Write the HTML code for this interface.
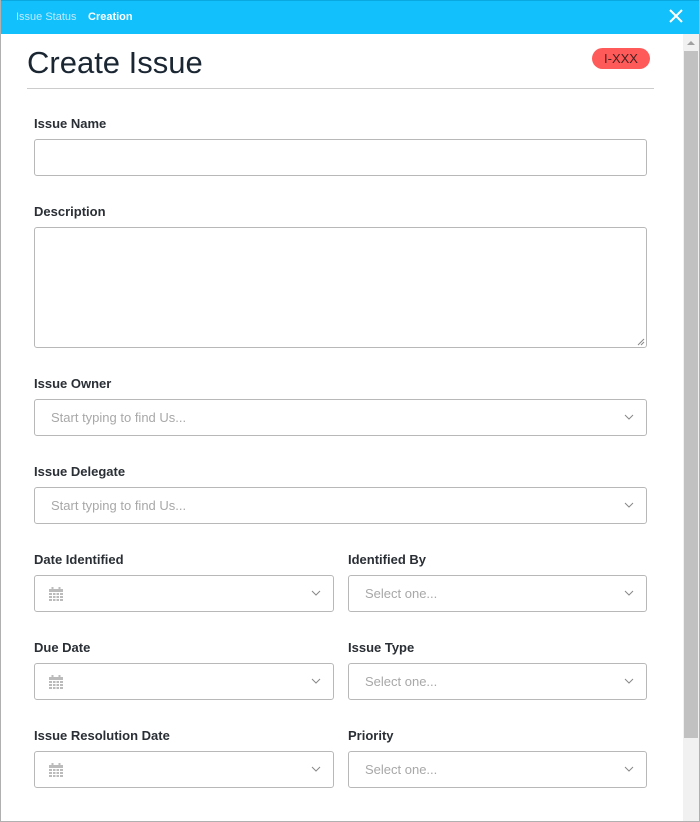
<!DOCTYPE html>
<html><head><style>
*{box-sizing:border-box;margin:0;padding:0}
body{width:700px;height:822px;overflow:hidden;font-family:"Liberation Sans",sans-serif;background:#fff;position:relative}
.frame{position:absolute;inset:0;border:1px solid #b0b0b0;border-top:none}
.hdr{position:absolute;left:0;top:0;width:700px;height:34px;background:#12c0fc;border:1px solid #0aa8e0;border-bottom:none}
.hdr .s{position:absolute;left:15px;top:10px;font-size:11px;color:#bfeaff}
.hdr .c{position:absolute;left:87px;top:10px;font-size:11px;color:#fff;font-weight:bold}
.x{position:absolute;left:667px;top:7px}
h1{position:absolute;left:27px;top:45px;font-size:31px;font-weight:normal;color:#1b2633}
.badge{position:absolute;left:592px;top:48px;width:58px;height:21px;border-radius:11px;background:#ff5a5a;color:#4a2020;font-size:13px;text-align:center;line-height:21px}
.rule{position:absolute;left:27px;top:88px;width:627px;height:1px;background:#ccc}
.lbl{position:absolute;font-size:13px;font-weight:bold;color:#2a2f35}
.in{position:absolute;border:1px solid #b8b8b8;border-radius:3px;background:#fff;height:37px}
.ph{position:absolute;left:16px;top:10px;font-size:13px;color:#a8a8a8}
.chev{position:absolute;right:12px;top:14px}
.sb{position:absolute;left:683px;top:34px;width:16px;height:787px;background:#f1f1f1}
.thumb{position:absolute;left:684px;top:51px;width:14px;height:687px;background:#c1c1c1}
</style></head><body>
<div class="hdr"><span class="s">Issue Status</span><span class="c">Creation</span>
<svg class="x" width="16" height="16" viewBox="0 0 16 16"><path d="M2 2L14 14M14 2L2 14" stroke="#fff" stroke-width="2"/></svg></div>
<div class="frame"></div>
<div class="sb"></div><div class="thumb"></div>
<svg style="position:absolute;left:686px;top:40px" width="10" height="6"><path d="M1 5L5 1L9 5Z" fill="#a0a0a0"/></svg>
<h1>Create Issue</h1>
<div class="badge">I-XXX</div>
<div class="rule"></div>

<div class="lbl" style="left:34px;top:116px">Issue Name</div>
<div class="in" style="left:34px;top:139px;width:613px"></div>
<div class="lbl" style="left:34px;top:204px">Description</div>
<div class="in" style="left:34px;top:227px;width:613px;height:121px">
<svg style="position:absolute;right:1px;bottom:1px" width="8" height="8"><path d="M7 1L1 7M7 4L4 7" stroke="#888"/></svg></div>

<div class="lbl" style="left:34px;top:376px">Issue Owner</div>
<div class="in" style="left:34px;top:399px;width:613px"><span class="ph">Start typing to find Us...</span><svg class="chev" width="10" height="6"><path d="M1 1L5 5L9 1" stroke="#888" fill="none"/></svg></div>
<div class="lbl" style="left:34px;top:464px">Issue Delegate</div>
<div class="in" style="left:34px;top:487px;width:613px"><span class="ph">Start typing to find Us...</span><svg class="chev" width="10" height="6"><path d="M1 1L5 5L9 1" stroke="#888" fill="none"/></svg></div>

<div class="lbl" style="left:34px;top:552px">Date Identified</div>
<div class="in" style="left:34px;top:575px;width:300px"><svg style="position:absolute;left:13px;top:10px" width="16" height="16" viewBox="0 0 16 16"><rect x="1" y="3" width="14" height="12" fill="#bbb"/><g stroke="#fff"><path d="M1 6.5H15M1 9.5H15M1 12.5H15M4.5 6V15M8 6V15M11.5 6V15"/></g><rect x="3.5" y="1" width="2" height="3" fill="#bbb"/><rect x="10.5" y="1" width="2" height="3" fill="#bbb"/></svg><svg class="chev" width="10" height="6"><path d="M1 1L5 5L9 1" stroke="#888" fill="none"/></svg></div>
<div class="lbl" style="left:348px;top:552px">Identified By</div>
<div class="in" style="left:348px;top:575px;width:299px"><span class="ph">Select one...</span><svg class="chev" width="10" height="6"><path d="M1 1L5 5L9 1" stroke="#888" fill="none"/></svg></div>

<div class="lbl" style="left:34px;top:640px">Due Date</div>
<div class="in" style="left:34px;top:663px;width:300px"><svg style="position:absolute;left:13px;top:10px" width="16" height="16" viewBox="0 0 16 16"><rect x="1" y="3" width="14" height="12" fill="#bbb"/><g stroke="#fff"><path d="M1 6.5H15M1 9.5H15M1 12.5H15M4.5 6V15M8 6V15M11.5 6V15"/></g><rect x="3.5" y="1" width="2" height="3" fill="#bbb"/><rect x="10.5" y="1" width="2" height="3" fill="#bbb"/></svg><svg class="chev" width="10" height="6"><path d="M1 1L5 5L9 1" stroke="#888" fill="none"/></svg></div>
<div class="lbl" style="left:348px;top:640px">Issue Type</div>
<div class="in" style="left:348px;top:663px;width:299px"><span class="ph">Select one...</span><svg class="chev" width="10" height="6"><path d="M1 1L5 5L9 1" stroke="#888" fill="none"/></svg></div>

<div class="lbl" style="left:34px;top:728px">Issue Resolution Date</div>
<div class="in" style="left:34px;top:751px;width:300px"><svg style="position:absolute;left:13px;top:10px" width="16" height="16" viewBox="0 0 16 16"><rect x="1" y="3" width="14" height="12" fill="#bbb"/><g stroke="#fff"><path d="M1 6.5H15M1 9.5H15M1 12.5H15M4.5 6V15M8 6V15M11.5 6V15"/></g><rect x="3.5" y="1" width="2" height="3" fill="#bbb"/><rect x="10.5" y="1" width="2" height="3" fill="#bbb"/></svg><svg class="chev" width="10" height="6"><path d="M1 1L5 5L9 1" stroke="#888" fill="none"/></svg></div>
<div class="lbl" style="left:348px;top:728px">Priority</div>
<div class="in" style="left:348px;top:751px;width:299px"><span class="ph">Select one...</span><svg class="chev" width="10" height="6"><path d="M1 1L5 5L9 1" stroke="#888" fill="none"/></svg></div>
</body></html>
